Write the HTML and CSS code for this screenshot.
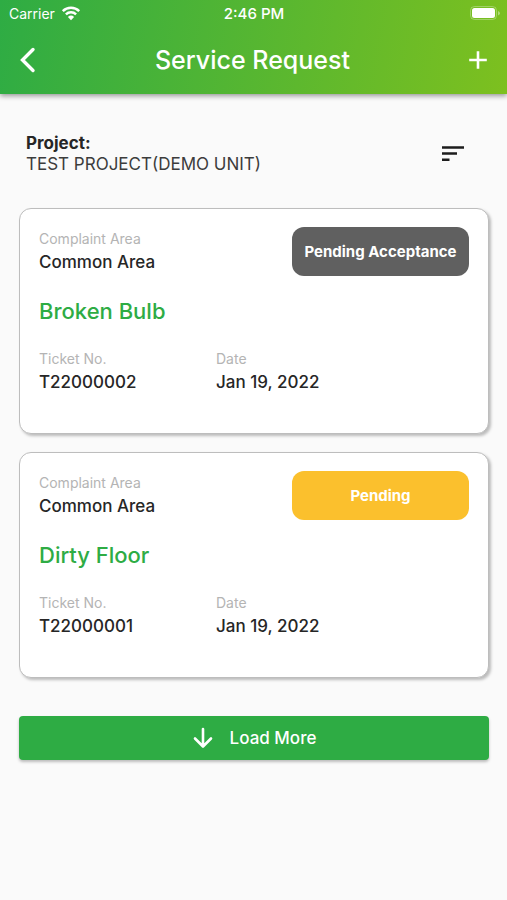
FILE: index.html
```html
<!DOCTYPE html>
<html lang="en">
<head>
<meta charset="utf-8">
<meta name="viewport" content="width=device-width, initial-scale=1">
<title>Service Request</title>
<link rel="stylesheet" href="styles.css">
</head>
<body>
<header class="header">
  <div class="status">
    <div class="carrier">
      <span>Carrier</span>
      <svg width="20" height="16" viewBox="0 0 20 16" fill="none" stroke="#fff" stroke-width="2.5" aria-hidden="true">
        <path d="M1.8 6.1a11.8 11.8 0 0 1 16.4 0"/>
        <path d="M4.9 9.3a7.4 7.4 0 0 1 10.2 0"/>
        <path d="M10 15.2 6.9 12a4.5 4.5 0 0 1 6.2 0z" fill="#fff" stroke="none"/>
      </svg>
    </div>
    <span class="clock">2:46 PM</span>
    <svg class="battery" width="31" height="15" viewBox="0 0 31 15" aria-hidden="true">
      <rect x="0.5" y="0.5" width="26" height="13" rx="4" fill="none" stroke="#fff" stroke-opacity=".3"/>
      <rect x="2" y="2" width="23" height="10" rx="2.5" fill="#fff"/>
      <path d="M28 5v4.5q2-.7 2-2.25T28 5z" fill="#fff" fill-opacity=".4"/>
    </svg>
  </div>
  <nav class="navbar">
    <button class="icon-button" aria-label="Back">
      <svg width="24" height="28" viewBox="0 0 24 28" fill="none" stroke="#fff" stroke-width="3.4" stroke-linecap="round"><path d="M18 3.500 7.500 14 18 24.500"/></svg>
    </button>
    <h1 class="title">Service Request</h1>
    <button class="icon-button" aria-label="Add request">
      <svg width="20" height="20" viewBox="0 0 20 20" fill="none" stroke="#fff" stroke-width="2.6"><path d="M10 1.200v17.600M1.200 10h17.600"/></svg>
    </button>
  </nav>
</header>
<main class="content">
  <section class="project">
    <div>
      <div class="project-label">Project:</div>
      <div class="project-name">TEST PROJECT(DEMO UNIT)</div>
    </div>
    <button class="icon-button" aria-label="Sort">
      <svg width="24" height="18" viewBox="0 0 24 18" fill="#1c1c1c"><path d="M1 1.200h22v2.500H1zM1 7.300h15v2.500H1zM1 13.400h7.500v2.500H1z"/></svg>
    </button>
  </section>
  <div class="cards">
    <article class="card">
      <div class="card-top">
        <div>
          <div class="label">Complaint Area</div>
          <div class="value">Common Area</div>
        </div>
        <span class="badge badge-acceptance">Pending Acceptance</span>
      </div>
      <h2 class="subject">Broken Bulb</h2>
      <div class="details">
        <div>
          <div class="label">Ticket No.</div>
          <div class="value">T22000002</div>
        </div>
        <div>
          <div class="label">Date</div>
          <div class="value">Jan 19, 2022</div>
        </div>
      </div>
    </article>
    <article class="card">
      <div class="card-top">
        <div>
          <div class="label">Complaint Area</div>
          <div class="value">Common Area</div>
        </div>
        <span class="badge badge-pending">Pending</span>
      </div>
      <h2 class="subject">Dirty Floor</h2>
      <div class="details">
        <div>
          <div class="label">Ticket No.</div>
          <div class="value">T22000001</div>
        </div>
        <div>
          <div class="label">Date</div>
          <div class="value">Jan 19, 2022</div>
        </div>
      </div>
    </article>
  </div>
  <button class="load-more">
    <svg width="22" height="22" viewBox="0 0 22 22" fill="none" stroke="#fff" stroke-width="2.6" stroke-linecap="round" stroke-linejoin="round" aria-hidden="true"><path d="M11 2v17M3 11.500l8 8 8-8"/></svg>
    <span>Load More</span>
  </button>
</main>
</body>
</html>
```
FILE: styles.css
```css
* {
  box-sizing: border-box;
}

body {
  margin: 0;
  min-height: 100vh;
  background: #fafafa;
  color: #262626;
  font-family: Inter, "Liberation Sans", sans-serif;
  font-size: 17px;
}

h1,
h2 {
  margin: 0;
}

button {
  font: inherit;
  border: 0;
  cursor: pointer;
}

svg {
  display: block;
}

.header {
  background: linear-gradient(100deg, #2eac44, #7dc01f);
  color: #fff;
  box-shadow: 0 2px 5px rgba(0, 0, 0, 0.4);
}

.status {
  display: grid;
  grid-template-columns: 1fr auto 1fr;
  align-items: center;
  height: 28px;
  padding: 0 8px 2px 9px;
  font-size: 14px;
}

.carrier {
  display: flex;
  align-items: center;
  gap: 6px;
}

.clock {
  font-size: 15px;
  font-weight: 500;
}

.battery {
  justify-self: end;
  margin-right: -2px;
}

.navbar {
  display: flex;
  align-items: center;
  justify-content: space-between;
  height: 66px;
  padding: 0 10px 2px 8px;
}

.title {
  font-size: 25px;
  font-weight: 500;
  line-height: 32px;
}

.icon-button {
  display: grid;
  place-items: center;
  width: 38px;
  height: 38px;
  padding: 0;
  background: none;
}

.content {
  padding: 39px 18px 24px 19px;
}

.project {
  display: flex;
  align-items: center;
  justify-content: space-between;
  padding: 0 17px 0 7px;
  line-height: 21px;
}

.project-label {
  font-weight: 700;
}

.project-name {
  color: #3c3c3c;
}

.cards {
  display: grid;
  gap: 18px;
  margin-top: 33px;
}

.card {
  padding: 18px 19px 39px;
  border: 1px solid #bdbdbd;
  border-radius: 12px;
  background: #fff;
  box-shadow: 2px 2px 3px rgba(0, 0, 0, 0.25);
}

.card-top,
.details {
  display: grid;
  grid-template-columns: 177px 1fr;
}

.card-top {
  grid-template-columns: 1fr 177px;
}

.label {
  color: #b4b4b4;
  font-size: 14px;
  line-height: 23px;
}

.value {
  font-weight: 500;
  line-height: 24px;
}

.badge {
  display: grid;
  place-items: center;
  height: 49px;
  border-radius: 12px;
  color: #fff;
  font-size: 15px;
  font-weight: 700;
}

.badge-acceptance {
  background: #606060;
}

.badge-pending {
  background: #fbc02d;
}

.subject {
  margin: 20px 0 21px;
  color: #2eac44;
  font-size: 22px;
  font-weight: 500;
  line-height: 30px;
}

.load-more {
  display: flex;
  align-items: center;
  justify-content: center;
  gap: 16px;
  width: 100%;
  height: 44px;
  margin-top: 38px;
  border-radius: 4px;
  background: #2eac44;
  color: #fff;
  font-weight: 500;
  box-shadow: 0 2px 3px rgba(0, 0, 0, 0.25);
}
```
